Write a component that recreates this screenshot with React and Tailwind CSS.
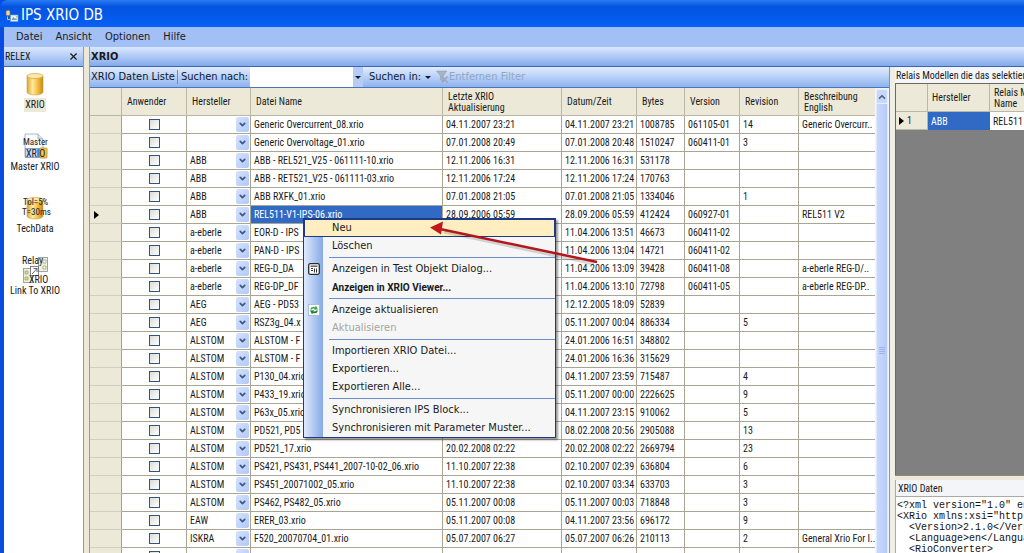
import React, { useState } from 'react';
import { ChevronDown, ChevronUp, X } from 'lucide-react';

const columns = [
    { title: 'Anwender', width: 'w-[65px]' },
    { title: 'Hersteller', width: 'w-[64px]' },
    { title: 'Datei Name', width: 'w-[192px]' },
    { title: 'Letzte XRIO\nAktualisierung', width: 'w-[119px]' },
    { title: 'Datum/Zeit', width: 'w-[75px]' },
    { title: 'Bytes', width: 'w-[48px]' },
    { title: 'Version', width: 'w-[55px]' },
    { title: 'Revision', width: 'w-[59px]' },
    { title: 'Beschreibung\nEnglish', width: '' },
];

// vendor, file, last update, date, bytes, version, revision, description
const files = [
    ['', 'Generic Overcurrent_08.xrio', '04.11.2007 23:21', '04.11.2007 23:21', '1008785', '061105-01', '14', 'Generic Overcurr..'],
    ['', 'Generic Overvoltage_01.xrio', '07.01.2008 20:49', '07.01.2008 20:48', '1510247', '060411-01', '3', ''],
    ['ABB', 'ABB - REL521_V25 - 061111-10.xrio', '12.11.2006 16:31', '12.11.2006 16:31', '531178', '', '', ''],
    ['ABB', 'ABB - RET521_V25 - 061111-03.xrio', '12.11.2006 17:24', '12.11.2006 17:24', '170763', '', '', ''],
    ['ABB', 'ABB RXFK_01.xrio', '07.01.2008 21:05', '07.01.2008 21:05', '1334046', '', '1', ''],
    ['ABB', 'REL511-V1-IPS-06.xrio', '28.09.2006 05:59', '28.09.2006 05:59', '412424', '060927-01', '', 'REL511 V2'],
    ['a-eberle', 'EOR-D - IPS', '', '11.04.2006 13:51', '46673', '060411-02', '', ''],
    ['a-eberle', 'PAN-D - IPS', '', '11.04.2006 13:04', '14721', '060411-02', '', ''],
    ['a-eberle', 'REG-D_DA', '', '11.04.2006 13:09', '39428', '060411-08', '', 'a-eberle REG-D/..'],
    ['a-eberle', 'REG-DP_DF', '', '11.04.2006 13:10', '72798', '060411-05', '', 'a-eberle REG-DP..'],
    ['AEG', 'AEG - PD53', '', '12.12.2005 18:09', '52839', '', '', ''],
    ['AEG', 'RSZ3g_04.x', '', '05.11.2007 00:04', '886334', '', '5', ''],
    ['ALSTOM', 'ALSTOM - F', '', '24.01.2006 16:51', '348802', '', '', ''],
    ['ALSTOM', 'ALSTOM - F', '', '24.01.2006 16:36', '315629', '', '', ''],
    ['ALSTOM', 'P130_04.xrio', '', '04.11.2007 23:59', '715487', '', '4', ''],
    ['ALSTOM', 'P433_19.xrio', '', '05.11.2007 00:00', '2226625', '', '9', ''],
    ['ALSTOM', 'P63x_05.xrio', '', '04.11.2007 23:15', '910062', '', '5', ''],
    ['ALSTOM', 'PD521, PD5', '', '08.02.2008 20:56', '2905088', '', '13', ''],
    ['ALSTOM', 'PD521_17.xrio', '20.02.2008 02:22', '20.02.2008 02:22', '2669794', '', '23', ''],
    ['ALSTOM', 'PS421, PS431, PS441_2007-10-02_06.xrio', '11.10.2007 22:38', '02.10.2007 02:39', '636804', '', '6', ''],
    ['ALSTOM', 'PS451_20071002_05.xrio', '11.10.2007 22:38', '02.10.2007 03:34', '633703', '', '3', ''],
    ['ALSTOM', 'PS462, PS482_05.xrio', '05.11.2007 00:08', '05.11.2007 00:03', '718848', '', '3', ''],
    ['EAW', 'ERER_03.xrio', '05.11.2007 00:08', '04.11.2007 23:56', '696172', '', '9', ''],
    ['ISKRA', 'F520_20070704_01.xrio', '05.07.2007 06:27', '05.07.2007 06:26', '210113', '', '2', 'General Xrio For I..'],
    ['', '', '', '', '', '', '', ''],
];

const vendors = ['', 'ABB', 'a-eberle', 'AEG', 'ALSTOM', 'EAW', 'ISKRA'];

const xml = `<?xml version="1.0" encoding="utf-8"?>
<XRio xmlns:xsi="http://www.w3.org/2001">
  <Version>2.1.0</Version>
  <Language>en</Language>
  <RioConverter>`;

const Cylinder = ({ x, y, w, h }) => (
    <g>
        <path
            d={`M${x} ${y + 3} v${h - 6} a${w / 2} 3 0 0 0 ${w} 0 v${6 - h}z`}
            fill="url(#gold)"
            stroke="#c89a3a"
            strokeWidth="0.6"
        />
        <ellipse cx={x + w / 2} cy={y + 3} rx={w / 2} ry="2.6" fill="#fbe7a6" stroke="#c79a3a" strokeWidth="0.6" />
    </g>
);

const Gold = () => (
    <defs>
        <linearGradient id="gold">
            <stop offset="0" stopColor="#e0a52c" />
            <stop offset="0.35" stopColor="#ffe9a0" />
            <stop offset="0.65" stopColor="#f5c040" />
            <stop offset="1" stopColor="#c58a1c" />
        </linearGradient>
    </defs>
);

const XrioIcon = () => (
    <svg width="32" height="28" viewBox="0 0 32 28">
        <Gold />
        <Cylinder x={8} y={3} w={16} h={22} />
    </svg>
);

const MasterIcon = () => (
    <svg width="32" height="28" viewBox="0 0 32 28" className="overflow-visible">
        <path d="M6 2 h13 l5 5 v18 h-18z" fill="#fbfcff" stroke="#9aa3b5" strokeWidth="0.8" />
        <path d="M19 2 v5 h5" fill="#dde4f0" stroke="#9aa3b5" strokeWidth="0.8" />
        <rect x="6.5" y="16.5" width="14" height="9" fill="#c8daf8" stroke="#6d8fd0" strokeWidth="0.8" />
        <rect x="20.5" y="16" width="7.5" height="10" rx="1" fill="#f5c44c" stroke="#b98a2a" strokeWidth="0.8" />
        <text x="4" y="13" fontSize="9" fill="#222">Master</text>
        <text x="7" y="25" fontSize="10" fill="#222">XRIO</text>
    </svg>
);

const TechIcon = () => (
    <svg width="32" height="28" viewBox="0 0 32 28" className="overflow-visible">
        <Cylinder x={8} y={3} w={16} h={22} />
        <text x="4" y="11" fontSize="9" fill="#222">Tol=5%</text>
        <text x="3" y="21" fontSize="9" fill="#222">T=30ms</text>
    </svg>
);

const LinkIcon = () => (
    <svg width="32" height="28" viewBox="0 0 32 28" className="overflow-visible">
        <rect x="19.5" y="1.5" width="9" height="14" fill="#eef0e0" stroke="#8d9188" strokeWidth="0.8" />
        <path d="M24 4 h3 v3 h-3z M24 10 h3 v3 h-3z" fill="#fff" stroke="#8f9d6c" strokeWidth="0.7" />
        <rect x="4.5" y="12.5" width="9" height="14" fill="#eef0e0" stroke="#8d9188" strokeWidth="0.8" />
        <path d="M6 15 h3 v3 h-3z M6 21 h3 v3 h-3z" fill="#e6dd6c" stroke="#8f9d6c" strokeWidth="0.7" />
        <rect x="11.5" y="10.5" width="8" height="9" fill="#fff" stroke="#667" strokeWidth="0.8" />
        <path d="M13 18 L18 12.5 M14.5 12.5 h3.5 v3.5" fill="none" stroke="#556" strokeWidth="0.9" />
        <text x="3" y="8" fontSize="10" fill="#222">Relay</text>
        <text x="10" y="27" fontSize="10" fill="#222">XRIO</text>
    </svg>
);

const AppIcon = () => (
    <svg width="14" height="14" viewBox="0 0 14 14">
        <path d="M1 2 q2.5 -1.5 4 0 v4 q-2 1.5 -4 0z" fill="#f0d6a0" stroke="#8a6a3a" strokeWidth="0.6" />
        <path d="M2.5 7.5 v3 h2.5" fill="none" stroke="#dbe7ff" strokeWidth="0.8" />
        <rect x="5.5" y="6" width="7.5" height="6.5" fill="#e8f2ea" stroke="#7d9bc9" strokeWidth="0.6" />
        <path d="M6.5 11 l2 -3 1.5 2 1 -1 1 2z" fill="#5c9fd0" />
        <rect x="11" y="7" width="1.5" height="1.5" fill="#d8b24a" />
    </svg>
);

const FilterIcon = () => (
    <svg width="12" height="14" viewBox="0 0 12 14">
        <path d="M0.5 1 h10.5 l-4 5 v6 l-2.5 -2 v-4z" fill="#a9b3c2" stroke="#8e99aa" strokeWidth="0.5" />
        <path d="M6 6.5 l5.5 6 M11.5 6.5 l-5.5 6" stroke="#9aa5b6" strokeWidth="1.4" />
    </svg>
);

const DialogIcon = () => (
    <svg width="12" height="12" viewBox="0 0 12 12">
        <rect x="0.7" y="0.7" width="10.6" height="10.6" rx="1.5" fill="#fff" stroke="#2b2b2b" strokeWidth="1.3" />
        <path d="M2.5 3.2 h7" stroke="#555" strokeWidth="1.4" />
        <path d="M3 5.5 h2 M3 7.5 h2 M6.5 5.5 v4 M8.5 5.5 v4" stroke="#333" strokeWidth="1" />
    </svg>
);

const RefreshIcon = () => (
    <svg width="12" height="12" viewBox="0 0 12 12">
        <rect x="0.4" y="0.4" width="11.2" height="11.2" fill="#fff" stroke="#9fb4d6" strokeWidth="0.8" />
        <path d="M2 5.5 Q3 2 7 3 L8 1.7 L10 5.5 L5.8 5.7 L6.7 4.7 Q4.5 4 3.8 5.6z" fill="#3fae49" />
        <path d="M10 6.5 Q9 10 5 9 L4 10.3 L2 6.5 L6.2 6.3 L5.3 7.3 Q7.5 8 8.2 6.4z" fill="#1f7f35" />
    </svg>
);

const Triangle = () => (
    <svg width="5" height="8" viewBox="0 0 5 8">
        <path d="M0 0 L5 4 L0 8z" fill="#000" />
    </svg>
);

const DownArrow = () => (
    <svg width="6" height="3" viewBox="0 0 6 3">
        <path d="M0 0 h6 l-3 3z" fill="#111a33" />
    </svg>
);

const navItems = [
    { label: 'XRIO', icon: <XrioIcon />, active: true },
    { label: 'Master XRIO', icon: <MasterIcon /> },
    { label: 'TechData', icon: <TechIcon /> },
    { label: 'Link To XRIO', icon: <LinkIcon /> },
];

const menuGroups = [
    [{ label: 'Neu', hot: true }, { label: 'Löschen' }],
    [
        { label: 'Anzeigen in Test Objekt Dialog...', icon: <DialogIcon /> },
        { label: 'Anzeigen in XRIO Viewer...', bold: true },
    ],
    [
        { label: 'Anzeige aktualisieren', icon: <RefreshIcon /> },
        { label: 'Aktualisieren', disabled: true },
    ],
    [{ label: 'Importieren XRIO Datei...' }, { label: 'Exportieren...' }, { label: 'Exportieren Alle...' }],
    [{ label: 'Synchronisieren IPS Block...' }, { label: 'Synchronisieren mit Parameter Muster...' }],
];

const Sidebar = () => (
    <aside className="w-20 shrink-0 bg-white flex flex-col border-r border-[#7f9db9]">
        <div className="h-5 shrink-0 flex items-center justify-between pl-px pr-1 bg-linear-to-b from-[#dbe8fd] to-[#8fb2ee] border-b border-[#3c66b4]">
            <span>RELEX</span>
            <button type="button" aria-label="Schließen">
                <X size={11} strokeWidth={2.5} />
            </button>
        </div>
        <nav className="flex flex-col gap-5 pt-[3px] pr-[18px]">
            {navItems.map((item) => (
                <button key={item.label} type="button" className="flex flex-col items-center h-[42px] w-[62px]">
                    {item.icon}
                    <span className={`px-px leading-[14px] whitespace-nowrap ${item.active ? 'bg-[#ece9d8]' : ''}`}>
                        {item.label}
                    </span>
                </button>
            ))}
        </nav>
    </aside>
);

const Toolbar = () => {
    const [search, setSearch] = useState('');

    return (
        <div className="h-[21px] shrink-0 flex items-center pl-px bg-linear-to-b from-[#e2edfe] to-[#8eb3ee] border-b border-[#4a74bd] font-['DejaVu_Sans_Condensed','DejaVu_Sans',sans-serif] text-[11px] text-[#10182c] whitespace-nowrap">
            <span className="w-[86px]">XRIO Daten Liste</span>
            <span className="w-px h-3.5 bg-[#6a8ccb] mr-[3px]" />
            <label htmlFor="search" className="w-[69px]">Suchen nach:</label>
            <input
                id="search"
                value={search}
                onChange={(e) => setSearch(e.target.value)}
                className="w-[103px] h-full bg-white px-1 outline-none"
            />
            <button type="button" aria-label="Suchverlauf" className="w-2.5 h-full flex items-center justify-center bg-[#b5cdf5]">
                <DownArrow />
            </button>
            <button type="button" className="flex items-center gap-1 pl-1.5 w-[73px]">
                Suchen in:
                <DownArrow />
            </button>
            <button type="button" disabled className="flex items-center gap-px text-[#93a5c4]">
                <FilterIcon />
                Entfernen Filter
            </button>
        </div>
    );
};

const FileRow = ({ file, current }) => {
    const [vendor, ...rest] = file;
    const [selected, setSelected] = useState(vendor);

    return (
        <tr className="h-[18px]">
            <th className="bg-[#ece9d8] border-b border-[#d3cfbd] border-r border-r-[#a5a292] pl-1">
                {current && <Triangle />}
            </th>
            <td className="border-r border-b border-[#a8a594] text-center">
                <input
                    type="checkbox"
                    aria-label={`Anwender ${rest[0]}`}
                    className="block mx-auto appearance-none size-[11px] border border-[#2f5680] bg-linear-to-br from-[#dcdcd7] to-white"
                />
            </td>
            <td className="border-r border-b border-[#a8a594]">
                <div className="grid items-center h-[17px]">
                    <select
                        aria-label={`Hersteller ${rest[0]}`}
                        value={selected}
                        onChange={(e) => setSelected(e.target.value)}
                        className="col-start-1 row-start-1 w-full appearance-none pl-[3px] outline-none leading-[16px]"
                    >
                        {vendors.map((v) => (
                            <option key={v} value={v}>{v}</option>
                        ))}
                    </select>
                    <span className="col-start-1 row-start-1 justify-self-end mr-px w-[13px] h-[15px] rounded-xs bg-linear-to-br from-[#d5e2fd] to-[#b1c8f6] flex items-center justify-center pointer-events-none">
                        <ChevronDown size={9} strokeWidth={4.5} className="text-[#3d5687]" />
                    </span>
                </div>
            </td>
            {rest.map((value, i) => (
                <td
                    key={i}
                    className={`border-b border-[#a8a594] pl-[3px] whitespace-nowrap overflow-hidden ${i < 6 ? 'border-r' : ''} ${current && i === 0 ? 'bg-[#316ac5] text-white' : ''}`}
                >
                    {value}
                </td>
            ))}
        </tr>
    );
};

const FileGrid = () => (
    <div className="flex-1 min-h-0 flex overflow-hidden bg-white">
        <div className="flex-1 min-w-0 overflow-hidden">
            <table className="w-full table-fixed border-separate border-spacing-0 text-left leading-[14px]">
                <thead>
                    <tr className="h-7 bg-[#ece9d8]">
                        <th className="w-8 border-r border-b border-[#bab7a6]" />
                        {columns.map((col) => (
                            <th
                                key={col.title}
                                className={`${col.width} font-normal pl-[5px] leading-[11px] whitespace-pre-line border-b border-r border-[#bab7a6] last:border-r-0`}
                            >
                                {col.title}
                            </th>
                        ))}
                    </tr>
                </thead>
                <tbody>
                    {files.map((file, i) => (
                        <FileRow key={i} file={file} current={i === 5} />
                    ))}
                </tbody>
            </table>
        </div>
        <div className="w-3.5 shrink-0 flex flex-col bg-[#f3f5fb] px-px">
            <button type="button" aria-label="Nach oben" className="h-[15px] mt-px flex items-center justify-center rounded-xs bg-[#c8d8fb] border border-[#e6eefc]">
                <ChevronUp size={10} strokeWidth={4} className="text-[#4d6185]" />
            </button>
            <div className="flex-1 flex flex-col items-center bg-linear-to-r from-[#c9d9fd] to-[#b7cbfa] border-x border-[#dfe8fd]">
                <span className="grow-11" />
                <span className="w-1.5 h-[7px] border-y border-[#9db4ea] flex flex-col justify-evenly">
                    <span className="h-px bg-[#9db4ea]" />
                    <span className="h-px bg-[#9db4ea]" />
                </span>
                <span className="grow-9" />
            </div>
        </div>
    </div>
);

const DetailPane = () => (
    <section className="w-[129px] shrink-0 flex flex-col overflow-hidden bg-[#f3f5f9] whitespace-nowrap">
        <h2 className="h-4 shrink-0 pl-px leading-[18px]">Relais Modellen die das selektierte XRIO</h2>
        <div className="flex-1 min-h-0 bg-[#808080] border-t border-l border-[#6a6a62] overflow-hidden">
            <table className="w-[200px] table-fixed border-separate border-spacing-0 text-left">
                <thead>
                    <tr className="h-7 bg-[#ece9d8] leading-[11px]">
                        <th className="w-8 border-r border-b border-[#bab7a6]" />
                        <th className="w-[62px] pl-1 font-normal border-r border-b border-[#bab7a6]">Hersteller</th>
                        <th className="pl-1 font-normal border-b border-[#bab7a6]">Relais Modell<br />Name</th>
                    </tr>
                </thead>
                <tbody>
                    <tr className="h-[18px] bg-white">
                        <th className="bg-[#ece9d8] font-normal border-r border-b border-[#bab7a6] pl-[3px]">
                            <span className="flex items-center gap-[3px]"><Triangle />1</span>
                        </th>
                        <td className="bg-[#316ac5] text-white pl-[3px]">ABB</td>
                        <td className="pl-[3px]">REL511</td>
                    </tr>
                </tbody>
            </table>
        </div>
        <div className="h-[5px] shrink-0 bg-[#ece9d8] border-t border-[#8a8a80]" />
        <h2 className="h-[17px] shrink-0 pl-0.5 leading-[17px] border-b border-l border-[#aaa]">XRIO Daten</h2>
        <pre className="h-14 shrink-0 bg-white border-l border-[#aaa] pl-px pt-[3px] overflow-hidden text-[10px] leading-[11px] font-['Liberation_Mono',monospace] text-[#111]">
            {xml}
        </pre>
    </section>
);

const ContextMenu = () => (
    <div
        role="menu"
        className="absolute left-[303px] top-[218px] w-[253px] border border-[#1c3a86] bg-[#f6f6f6] shadow-[2px_2px_2px_rgba(0,0,0,0.4)] font-['DejaVu_Sans_Condensed','DejaVu_Sans',sans-serif] text-[11px]"
    >
        {menuGroups.map((group, g) => (
            <React.Fragment key={g}>
                {g > 0 && (
                    <div role="separator" className="flex h-[5px]">
                        <span className="w-[19px] bg-linear-to-r from-[#dfeafc] to-[#86a9e6]" />
                        <span className="flex-1 ml-1.5 my-0.5 bg-[#6a8ccb]" />
                    </div>
                )}
                {group.map((item) => (
                    <button
                        key={item.label}
                        type="button"
                        role="menuitem"
                        disabled={item.disabled}
                        className={`flex w-full h-[18px] items-center text-left ${item.hot ? 'bg-[#ffeec2] outline outline-[#1c3a86] -outline-offset-1' : ''} ${item.disabled ? 'text-[#a5a5a0]' : 'text-[#1a1a1a]'}`}
                    >
                        <span className={`w-[19px] h-full flex items-center justify-center ${item.hot ? '' : 'bg-linear-to-r from-[#dfeafc] to-[#86a9e6]'}`}>
                            {item.icon}
                        </span>
                        <span className={`pl-[9px] ${item.bold ? "font-bold text-[10px] font-['Roboto',sans-serif]" : ''}`}>
                            {item.label}
                        </span>
                    </button>
                ))}
            </React.Fragment>
        ))}
    </div>
);

const PointerArrow = () => (
    <svg className="absolute left-[424px] top-[216px] pointer-events-none" width="184" height="58" viewBox="0 0 184 58">
        <path d="M20 16 L170 48" stroke="#000" strokeOpacity="0.15" strokeWidth="3" />
        <path d="M16 13 L173 46" stroke="#b3161b" strokeWidth="2.5" />
        <path d="M6 11.5 L19 5.5 L17 18.5z" fill="#c4161c" />
    </svg>
);

export default function App() {
    return (
        <div className="relative h-screen flex flex-col overflow-hidden bg-[#0a4be0] text-[10px] text-[#1a1a1a] font-['Roboto_Condensed','Liberation_Sans',sans-serif]">
            <header className="h-[27px] shrink-0 flex items-center gap-0.5 pl-[5px] pt-1 bg-linear-to-b from-[#2a7bf5] via-[#0353e0] via-25% to-[#0560f5] rounded-tl-lg">
                <AppIcon />
                <h1 className="text-white text-[15px] font-['DejaVu_Sans_Condensed','DejaVu_Sans',sans-serif]">IPS XRIO DB</h1>
            </header>

            <div className="flex-1 min-h-0 flex flex-col ml-1 bg-[#ece9d8]">
                <nav className="h-5 shrink-0 flex items-center gap-[13px] pl-3 pt-px bg-[#a3c0f6] font-['DejaVu_Sans_Condensed','DejaVu_Sans',sans-serif] text-[11px]">
                    {['Datei', 'Ansicht', 'Optionen', 'Hilfe'].map((label) => (
                        <button key={label} type="button">{label}</button>
                    ))}
                </nav>

                <div className="flex-1 min-h-0 flex">
                    <Sidebar />
                    <main className="flex-1 min-w-0 flex flex-col ml-[5px] border-l border-[#8f9cae]">
                        <h2 className="h-5 shrink-0 pl-px leading-[20px] bg-linear-to-b from-[#dbe8fd] to-[#83aaec] border-b border-[#3c66b4] font-bold text-[11px] font-['DejaVu_Sans_Condensed','DejaVu_Sans',sans-serif]">
                            XRIO
                        </h2>
                        <div className="flex-1 min-h-0 flex">
                            <div className="flex-1 min-w-0 flex flex-col border-r border-[#7f93b8]">
                                <Toolbar />
                                <FileGrid />
                            </div>
                            <div className="w-[5px] shrink-0 bg-[#f0efe6]" />
                            <DetailPane />
                        </div>
                    </main>
                </div>
            </div>

            <ContextMenu />
            <PointerArrow />
        </div>
    );
}
